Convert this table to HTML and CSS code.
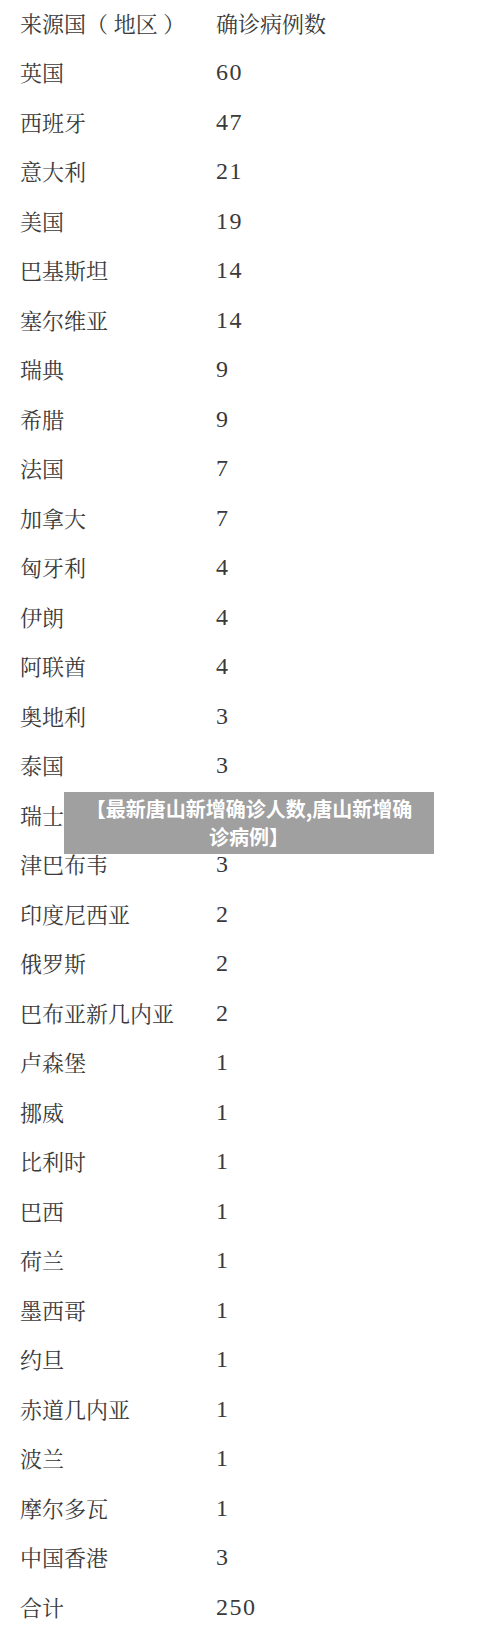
FILE: index.html
```html
<!DOCTYPE html>
<html lang="zh-CN">
<head>
<meta charset="utf-8">
<title>唐山新增确诊病例</title>
<link rel="stylesheet" href="styles.css">
</head>
<body>
<div class="page">
  <div class="table">
    <div class="row"><span class="name">来源国（ 地区 ）</span><span class="count head">确诊病例数</span></div>
    <div class="row"><span class="name">英国</span><span class="count">60</span></div>
    <div class="row"><span class="name">西班牙</span><span class="count">47</span></div>
    <div class="row"><span class="name">意大利</span><span class="count">21</span></div>
    <div class="row"><span class="name">美国</span><span class="count">19</span></div>
    <div class="row"><span class="name">巴基斯坦</span><span class="count">14</span></div>
    <div class="row"><span class="name">塞尔维亚</span><span class="count">14</span></div>
    <div class="row"><span class="name">瑞典</span><span class="count">9</span></div>
    <div class="row"><span class="name">希腊</span><span class="count">9</span></div>
    <div class="row"><span class="name">法国</span><span class="count">7</span></div>
    <div class="row"><span class="name">加拿大</span><span class="count">7</span></div>
    <div class="row"><span class="name">匈牙利</span><span class="count">4</span></div>
    <div class="row"><span class="name">伊朗</span><span class="count">4</span></div>
    <div class="row"><span class="name">阿联酋</span><span class="count">4</span></div>
    <div class="row"><span class="name">奥地利</span><span class="count">3</span></div>
    <div class="row"><span class="name">泰国</span><span class="count">3</span></div>
    <div class="row"><span class="name">瑞士</span><span class="count">3</span></div>
    <div class="row"><span class="name">津巴布韦</span><span class="count">3</span></div>
    <div class="row"><span class="name">印度尼西亚</span><span class="count">2</span></div>
    <div class="row"><span class="name">俄罗斯</span><span class="count">2</span></div>
    <div class="row"><span class="name">巴布亚新几内亚</span><span class="count">2</span></div>
    <div class="row"><span class="name">卢森堡</span><span class="count">1</span></div>
    <div class="row"><span class="name">挪威</span><span class="count">1</span></div>
    <div class="row"><span class="name">比利时</span><span class="count">1</span></div>
    <div class="row"><span class="name">巴西</span><span class="count">1</span></div>
    <div class="row"><span class="name">荷兰</span><span class="count">1</span></div>
    <div class="row"><span class="name">墨西哥</span><span class="count">1</span></div>
    <div class="row"><span class="name">约旦</span><span class="count">1</span></div>
    <div class="row"><span class="name">赤道几内亚</span><span class="count">1</span></div>
    <div class="row"><span class="name">波兰</span><span class="count">1</span></div>
    <div class="row"><span class="name">摩尔多瓦</span><span class="count">1</span></div>
    <div class="row"><span class="name">中国香港</span><span class="count">3</span></div>
    <div class="row"><span class="name">合计</span><span class="count">250</span></div>
  </div>
  <div class="banner">【最新唐山新增确诊人数,唐山新增确诊病例】</div>
</div>
</body>
</html>
```
FILE: styles.css
```css
html, body {
  margin: 0;
  padding: 0;
  background: #ffffff;
}
.page {
  position: relative;
  width: 500px;
  height: 1647px;
  overflow: hidden;
}
.table {
  display: flex;
  flex-direction: column;
  padding-left: 20px;
  margin-top: -2px;
  color: #3a3a3a;
}
.row {
  display: grid;
  grid-template-columns: 196px 1fr;
  height: 49.5px;
  align-items: center;
}
.name {
  font-family: "Noto Serif CJK SC", "Noto Sans CJK SC", serif;
  font-size: 22px;
  line-height: 30px;
  font-weight: 400;
  white-space: pre;
}
.count {
  font-family: "Liberation Serif", "Times New Roman", serif;
  font-size: 24px;
  line-height: 30px;
  letter-spacing: 1.5px;
}
.count.head {
  font-family: "Noto Serif CJK SC", "Noto Sans CJK SC", serif;
  font-size: 22px;
  letter-spacing: 0;
}
.banner {
  position: absolute;
  left: 64px;
  top: 792px;
  width: 370px;
  height: 62px;
  box-sizing: border-box;
  padding: 3px 15px;
  background: #a0a0a0;
  color: #ffffff;
  font-family: "Noto Sans CJK SC", sans-serif;
  font-weight: 700;
  font-size: 20px;
  line-height: 28px;
  text-align: center;
}
```
